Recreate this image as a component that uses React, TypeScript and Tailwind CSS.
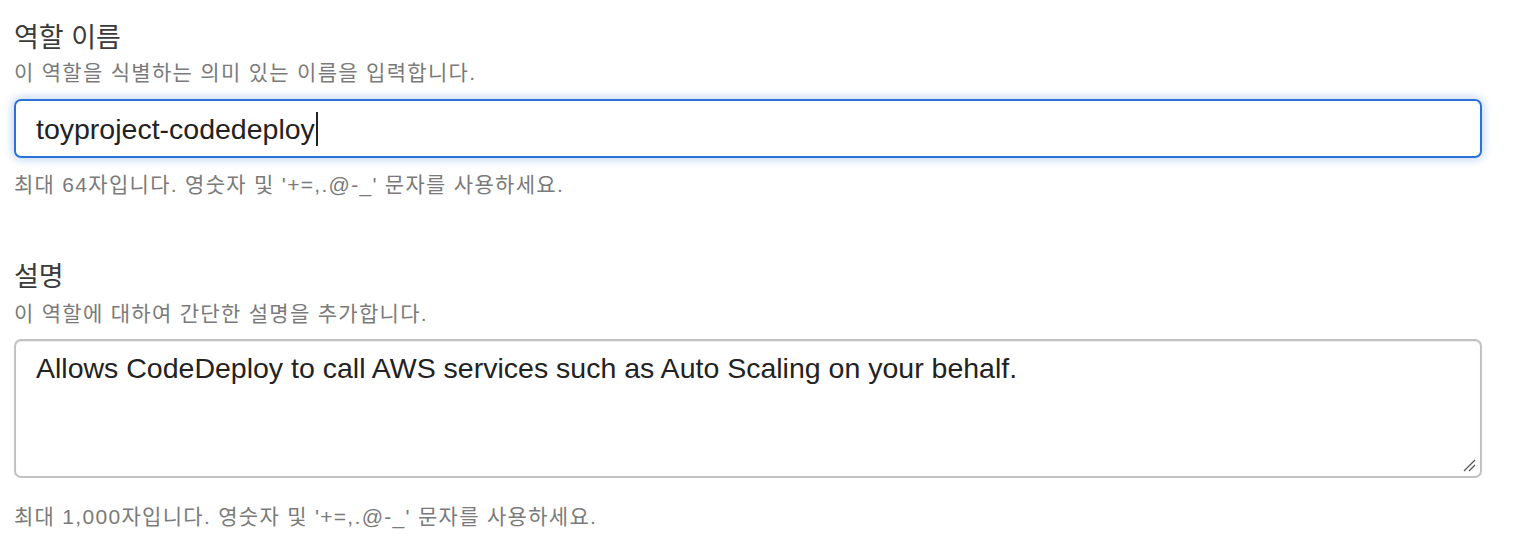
import React from "react";

const font = { fontFamily: '"Liberation Sans", "Noto Sans CJK KR", sans-serif' };

export default function App() {
  return (
    <div className="w-[1534px] h-[548px] bg-white text-[#16191f]" style={font}>
      <div className="pl-[14px] w-[1482px] pt-[22px]">
        <div className="text-[27px] leading-[32px] text-[#3a3a3a]">역할 이름</div>
        <div className="text-[21px] leading-[28px] tracking-[1.3px] text-[#7a7a7a] mt-[5px]">이 역할을 식별하는 의미 있는 이름을 입력합니다.</div>
        <div className="mt-[12px] h-[59px] rounded-[7px] border-2 border-[#2a72d8] shadow-[0_0_8px_2px_rgba(42,114,216,0.28)] flex items-center pl-[20px] text-[28.5px] leading-[34px] text-[#222222]">
          <span>toyproject-codedeploy</span>
          <span className="w-[2px] h-[34px] bg-[#222222] ml-[1px]" />
        </div>
        <div className="text-[21px] leading-[28px] tracking-[1.3px] text-[#7a7a7a] mt-[13px]">최대 64자입니다. 영숫자 및 '+=,.@-_' 문자를 사용하세요.</div>

        <div className="text-[27px] leading-[32px] text-[#3a3a3a] mt-[62px]">설명</div>
        <div className="text-[21px] leading-[28px] tracking-[1.3px] text-[#7a7a7a] mt-[7px]">이 역할에 대하여 간단한 설명을 추가합니다.</div>
        <div className="relative mt-[11px] h-[139px] rounded-[7px] border-2 border-[#c2c2c2] shadow-[inset_0_1px_1px_rgba(0,0,0,0.08)] pl-[20px] pt-[10px] text-[28.5px] leading-[34px] text-[#222222]">
          Allows CodeDeploy to call AWS services such as Auto Scaling on your behalf.
          <svg className="absolute right-[4px] bottom-[4px]" width="14" height="14" viewBox="0 0 14 14">
            <line x1="2" y1="13" x2="13" y2="2" stroke="#555" strokeWidth="1.3" />
            <line x1="7" y1="13" x2="13" y2="7" stroke="#555" strokeWidth="1.3" />
          </svg>
        </div>
        <div className="text-[21px] leading-[28px] tracking-[1.3px] text-[#7a7a7a] mt-[25px]">최대 1,000자입니다. 영숫자 및 '+=,.@-_' 문자를 사용하세요.</div>
      </div>
    </div>
  );
}
